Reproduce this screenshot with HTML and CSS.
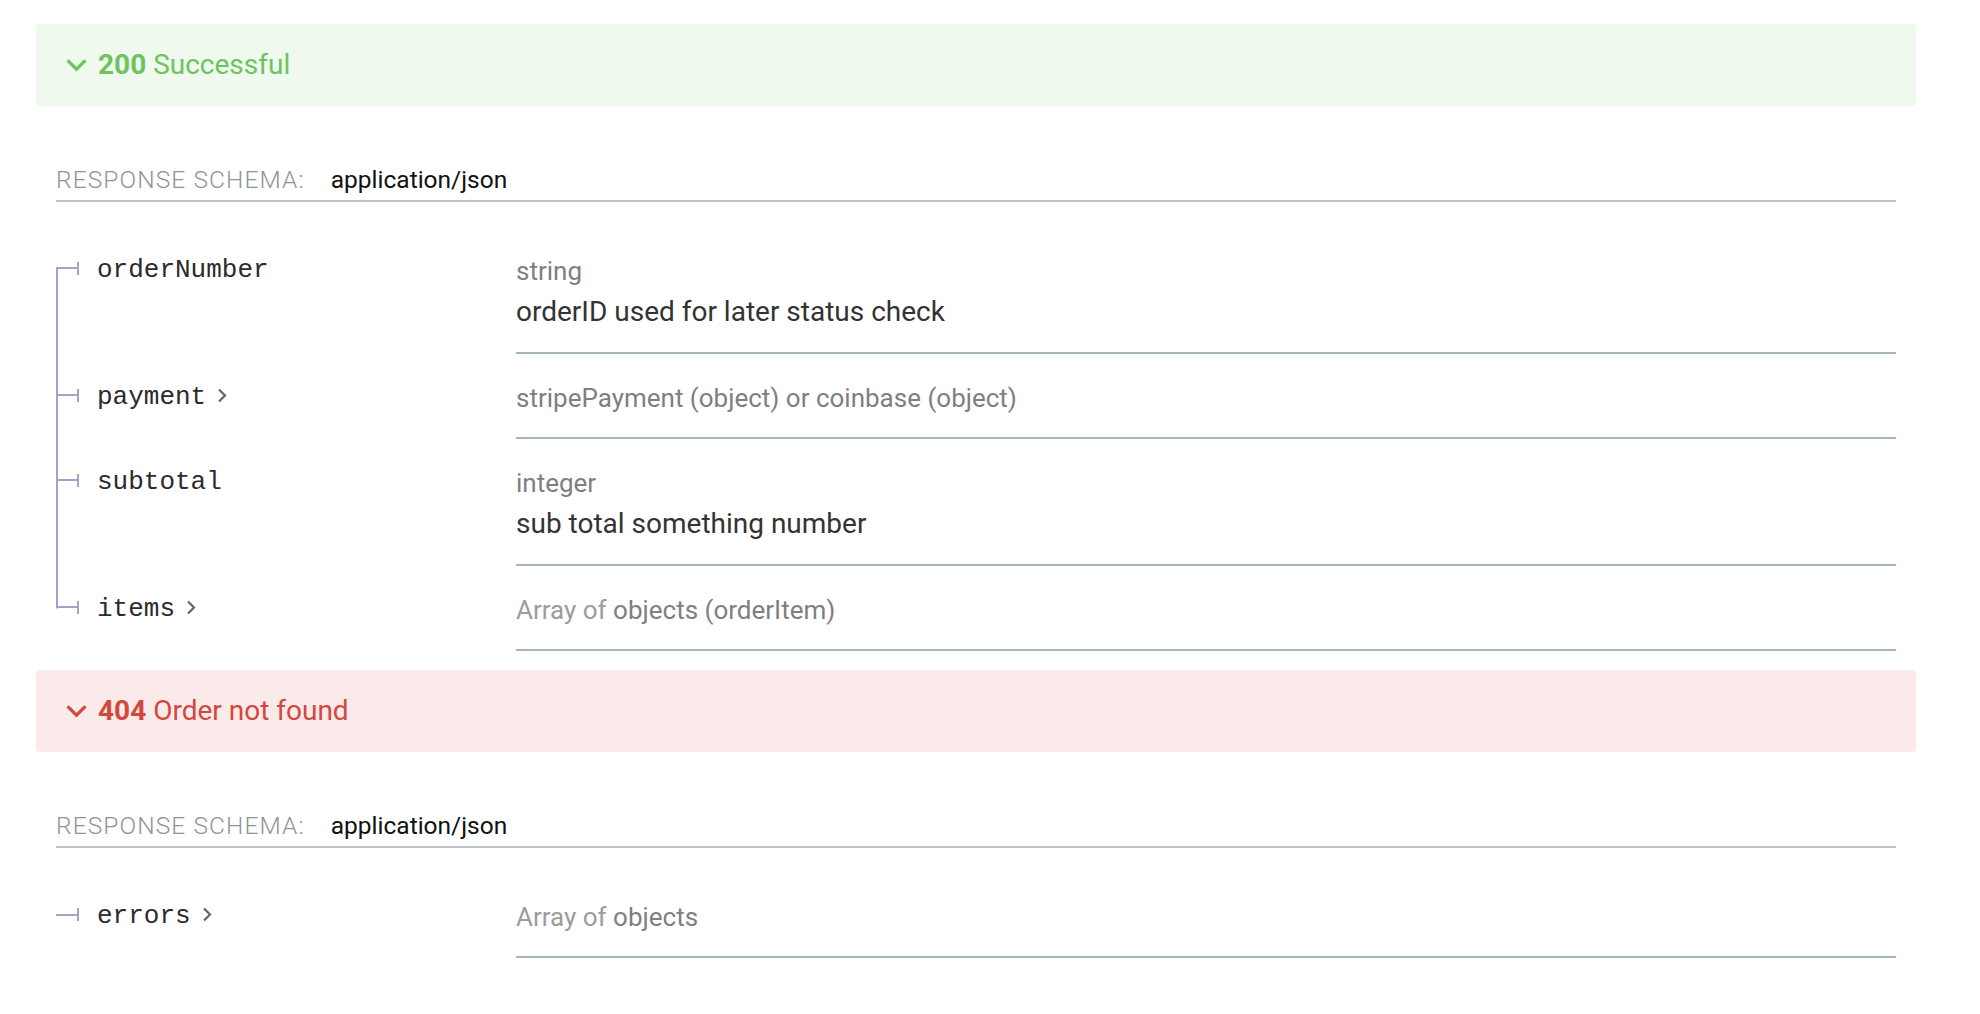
FILE: index.html
```html
<!DOCTYPE html>
<html lang="en">
<head>
<meta charset="utf-8">
<title>Responses</title>
<link rel="stylesheet" href="styles.css">
</head>
<body>
<div class="page">

  <div class="resp-head success">
    <svg class="chev" viewBox="0 0 24 16" width="23" height="15"><polyline points="2.5,2.5 12,12 21.5,2.5"/></svg>
    <span class="resp-title"><strong>200</strong> Successful</span>
  </div>
  <div class="resp-body">
    <div class="schema-head">
      <span class="schema-label">Response Schema:</span>
      <span class="schema-type">application/json</span>
    </div>
    <div class="props">
      <div class="prop first">
        <div class="name-cell"><div class="name-line"><span class="tick"></span><span class="pname">orderNumber</span></div></div>
        <div class="detail-cell">
          <div class="type"><span class="tname">string</span></div>
          <div class="desc">orderID used for later status check</div>
        </div>
      </div>
      <div class="prop">
        <div class="name-cell"><div class="name-line"><span class="tick"></span><span class="pname">payment</span><svg class="shelf" viewBox="0 0 12 17" width="12" height="17"><polyline points="3,2.5 9,8.5 3,14.5"/></svg></div></div>
        <div class="detail-cell">
          <div class="type"><span class="tname">stripePayment (object) or coinbase (object)</span></div>
        </div>
      </div>
      <div class="prop">
        <div class="name-cell"><div class="name-line"><span class="tick"></span><span class="pname">subtotal</span></div></div>
        <div class="detail-cell">
          <div class="type"><span class="tname">integer</span></div>
          <div class="desc">sub total something number</div>
        </div>
      </div>
      <div class="prop last">
        <div class="name-cell"><div class="name-line"><span class="tick"></span><span class="pname">items</span><svg class="shelf" viewBox="0 0 12 17" width="12" height="17"><polyline points="3,2.5 9,8.5 3,14.5"/></svg></div></div>
        <div class="detail-cell">
          <div class="type"><span class="tprefix">Array of </span><span class="tname">objects (orderItem)</span></div>
        </div>
      </div>
    </div>
  </div>

  <div class="resp-head error">
    <svg class="chev" viewBox="0 0 24 16" width="23" height="15"><polyline points="2.5,2.5 12,12 21.5,2.5"/></svg>
    <span class="resp-title"><strong>404</strong> Order not found</span>
  </div>
  <div class="resp-body">
    <div class="schema-head">
      <span class="schema-label">Response Schema:</span>
      <span class="schema-type">application/json</span>
    </div>
    <div class="props">
      <div class="prop first last">
        <div class="name-cell"><div class="name-line"><span class="tick"></span><span class="pname">errors</span><svg class="shelf" viewBox="0 0 12 17" width="12" height="17"><polyline points="3,2.5 9,8.5 3,14.5"/></svg></div></div>
        <div class="detail-cell">
          <div class="type"><span class="tprefix">Array of </span><span class="tname">objects</span></div>
        </div>
      </div>
    </div>
  </div>

</div>
</body>
</html>
```

FILE: styles.css
```css
html, body {
  margin: 0;
  padding: 0;
  background: #ffffff;
}

body {
  font-family: Roboto, "Liberation Sans", Arial, sans-serif;
  color: #333333;
}

.page {
  padding: 24px 64px 40px 36px;
}

/* response header bar */
.resp-head {
  height: 82px;
  box-sizing: border-box;
  display: flex;
  align-items: center;
  padding: 0 0 0 29px;
  border-radius: 4px;
  font-size: 28px;
  line-height: 1.2;
}

.resp-head .chev {
  flex: none;
  margin-right: 10px;
  fill: none;
  stroke: currentColor;
  stroke-width: 3.4;
  stroke-linecap: butt;
  stroke-linejoin: miter;
}

.resp-title strong {
  font-weight: 700;
}

.resp-head.success {
  background: #eff9ee;
  color: #6bc55c;
}

.resp-head.error {
  background: #fbeaea;
  color: #d4473d;
  margin-top: 19.5px;
}

/* body */
.resp-body {
  padding: 0 20px;
}

.schema-head {
  margin-top: 55.5px;
  display: flex;
  align-items: baseline;
  padding-bottom: 1.5px;
  border-bottom: 2px solid #c0c3c6;
  font-size: 24.5px;
  line-height: 36.75px;
}

.schema-label {
  text-transform: uppercase;
  color: #8f9498;
  font-weight: 300;
  letter-spacing: 1.1px;
  margin-right: 26px;
}

.schema-type {
  color: #111111;
}

.props {
  margin-top: 25px;
}

.prop {
  display: flex;
}

.name-cell {
  flex: none;
  width: 460px;
  box-sizing: border-box;
  padding-top: 29px;
  background-image: linear-gradient(#a3a3cc, #a3a3cc);
  background-repeat: no-repeat;
  background-size: 2px 100%;
  background-position: 0 0;
}

.prop.first .name-cell {
  background-position: 0 40.5px;
}

.prop.last .name-cell {
  background-size: 2px 42.5px;
}

.prop.first.last .name-cell {
  background-image: none;
}

.name-line {
  display: flex;
  align-items: flex-start;
  height: 30px;
}

.tick {
  flex: none;
  width: 23px;
  height: 13px;
  margin-top: 6px;
  background:
    linear-gradient(#a3a3cc, #a3a3cc) 0 50% / 100% 2px no-repeat,
    linear-gradient(#a3a3cc, #a3a3cc) 100% 0 / 2px 100% no-repeat;
}

.pname {
  margin-left: 18px;
  font-family: "Liberation Mono", "Courier New", monospace;
  font-size: 26px;
  line-height: 28px;
  color: #2b2b2b;
}

.shelf {
  flex: none;
  margin-left: 10px;
  margin-top: 4px;
  fill: none;
  stroke: #666666;
  stroke-width: 2.2;
}

.detail-cell {
  flex: 1;
  min-width: 0;
  padding: 24px 0 19px;
  border-bottom: 2px solid #a5b5bf;
}

.type {
  font-size: 26px;
  line-height: 40px;
}

.tname {
  color: #7f7f7f;
}

.tprefix {
  color: #9c9c9c;
}

.desc {
  font-size: 28px;
  line-height: 36px;
  margin: 3px 0 3px;
  color: #333333;
}
```
